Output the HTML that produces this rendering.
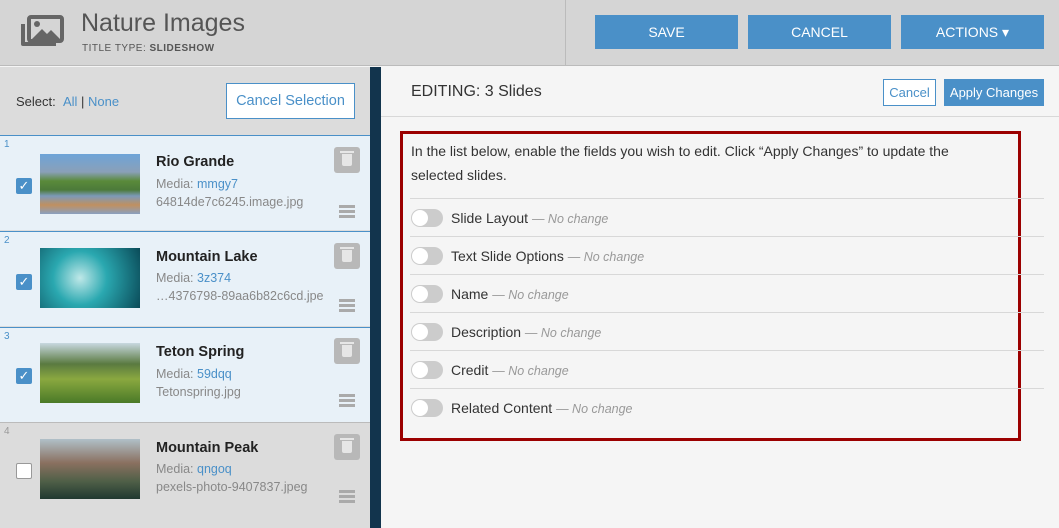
<!DOCTYPE html><html><head><style>
*{box-sizing:border-box;margin:0;padding:0}
body{width:1059px;height:528px;overflow:hidden;font-family:"Liberation Sans",sans-serif;background:#f5f5f5;position:relative;color:#333}
.abs{position:absolute}
.hdr{left:0;top:0;width:1059px;height:66px;background:#d5d5d5;border-bottom:1px solid #bbb}
.btn{top:15px;height:34px;width:143px;background:#4a90c8;color:#fff;font-size:14px;text-align:center;line-height:34px}
.item{left:0;width:370px;height:95px;border-top:1px solid #4a90c8}
.num{left:4px;font-size:10px;color:#4a90c8}
.cb{left:16px;width:16px;height:16px;background:#4a90c8;border-radius:2px;color:#fff;font-size:13px;text-align:center;line-height:16px}
.th{left:40px;width:100px;height:60px}
.t{left:156px;font-weight:bold;font-size:14.5px;color:#222}
.m{left:156px;font-size:12.5px;color:#888}
.m b{color:#4a90c8;font-weight:normal}
.trash{left:334px;width:26px;height:26px;background:#b8b8b8;border-radius:3px}
.trash:after{content:"";position:absolute;left:8px;top:7px;width:10px;height:12px;background:#e6e6e6;border-radius:0 0 2px 2px}
.trash:before{content:"";position:absolute;left:6px;top:4px;width:14px;height:2px;background:#e6e6e6}
.ham{left:339px;width:16px;height:3px;background:#aaa;box-shadow:0 5px #aaa,0 10px #aaa}
.row{left:410px;width:634px;height:38px;border-top:1px solid #d8d8d8;font-size:14px;line-height:38px;padding-left:41px;color:#333}
.row i{color:#999;font-size:12.5px}
.tog{position:absolute;left:1px;top:10px;width:32px;height:18px;border-radius:9px;background:#ccc}
.tog:after{content:"";position:absolute;left:1px;top:1px;width:16px;height:16px;border-radius:50%;background:#fff}
</style></head><body>
<div class="abs hdr"></div>
<svg class="abs" style="left:20px;top:14px" width="45" height="36" viewBox="0 0 45 36"><path d="M3 10v20h33" fill="none" stroke="#666" stroke-width="4" stroke-linejoin="round"/><rect x="9" y="3" width="33" height="24" rx="2" fill="none" stroke="#666" stroke-width="4"/><circle cx="17" cy="10" r="3" fill="#666"/><path d="M12 25l10-10 5 5 4-4 9 9z" fill="#666"/></svg>
<div class="abs" style="left:81px;top:9px;font-size:25px;color:#555;font-weight:300">Nature Images</div>
<div class="abs" style="left:82px;top:43px;font-size:10px;color:#555;letter-spacing:.5px">TITLE TYPE: <b>SLIDESHOW</b></div>
<div class="abs" style="left:565px;top:0;width:1px;height:66px;background:#bbb"></div>
<div class="abs btn" style="left:595px">SAVE</div>
<div class="abs btn" style="left:748px">CANCEL</div>
<div class="abs btn" style="left:901px">ACTIONS ▾</div>
<div class="abs" style="left:0;top:67px;width:370px;height:461px;background:#dcdcdc"></div>
<div class="abs" style="left:370px;top:67px;width:11px;height:461px;background:#12344d"></div>
<div class="abs" style="left:16px;top:94px;font-size:13px">Select: <span style="color:#4a90c8">&nbsp;All</span> | <span style="color:#4a90c8">None</span></div>
<div class="abs" style="left:226px;top:83px;width:129px;height:36px;background:#fff;border:1px solid #4a90c8;color:#4a90c8;font-size:14.5px;text-align:center;line-height:34px">Cancel Selection</div>

<div class="abs item" style="top:135px;background:#e8f1f8"><div class="abs num" style="top:3px">1</div><div class="abs cb" style="top:42px">✓</div><div class="abs th" style="top:18px;background:linear-gradient(#6ea4d8 0,#8aa0b8 30%,#5a8a3a 45%,#4c7a3a 60%,#7c9ab8 70%,#c09060 85%,#8aa0c0)"></div><div class="abs t" style="top:18px">Rio Grande</div><div class="abs m" style="top:41px">Media: <b>mmgy7</b></div><div class="abs m" style="top:59px">64814de7c6245.image.jpg</div><div class="abs trash" style="top:11px"></div><div class="abs ham" style="top:69px"></div></div>
<div class="abs item" style="top:231px;background:#e8f1f8"><div class="abs num" style="top:3px">2</div><div class="abs cb" style="top:42px">✓</div><div class="abs th" style="top:16px;background:radial-gradient(circle at 40% 50%,#bfe8e8,#2aa8b0 40%,#0a4a58)"></div><div class="abs t" style="top:17px">Mountain Lake</div><div class="abs m" style="top:39px">Media: <b>3z374</b></div><div class="abs m" style="top:57px">…4376798-89aa6b82c6cd.jpe</div><div class="abs trash" style="top:11px"></div><div class="abs ham" style="top:67px"></div></div>
<div class="abs item" style="top:327px;background:#e8f1f8"><div class="abs num" style="top:3px">3</div><div class="abs cb" style="top:40px">✓</div><div class="abs th" style="top:15px;background:linear-gradient(#c8d8e0,#5a7a40 35%,#8aa840 60%,#4a7a28)"></div><div class="abs t" style="top:16px">Teton Spring</div><div class="abs m" style="top:39px">Media: <b>59dqq</b></div><div class="abs m" style="top:57px">Tetonspring.jpg</div><div class="abs trash" style="top:10px"></div><div class="abs ham" style="top:66px"></div></div>
<div class="abs item" style="top:422px;background:#dcdcdc;border-top-color:#bbb"><div class="abs num" style="top:3px;color:#999">4</div><div class="abs" style="left:16px;top:40px;width:16px;height:16px;background:#fff;border:1px solid #999;border-radius:2px"></div><div class="abs th" style="top:16px;background:linear-gradient(#b0c0c8,#8a7060 40%,#506048 70%,#203830)"></div><div class="abs t" style="top:17px">Mountain Peak</div><div class="abs m" style="top:39px">Media: <b>qngoq</b></div><div class="abs m" style="top:57px">pexels-photo-9407837.jpeg</div><div class="abs trash" style="top:11px"></div><div class="abs ham" style="top:67px"></div></div>

<div class="abs" style="left:381px;top:116px;width:678px;height:1px;background:#d8d8d8"></div>
<div class="abs" style="left:411px;top:83px;font-size:16px;color:#333">EDITING: <span style="font-weight:500">3 Slides</span></div>
<div class="abs" style="left:883px;top:79px;width:53px;height:27px;background:#fff;border:1px solid #4a90c8;color:#4a90c8;font-size:13px;text-align:center;line-height:25px">Cancel</div>
<div class="abs" style="left:944px;top:79px;width:100px;height:27px;background:#4a90c8;color:#fff;font-size:13px;text-align:center;line-height:27px">Apply Changes</div>
<div class="abs" style="left:400px;top:131px;width:621px;height:310px;border:3px solid #9b0000"></div>
<div class="abs" style="left:411px;top:139px;width:575px;font-size:14px;line-height:24px;color:#333">In the list below, enable the fields you wish to edit. Click “Apply Changes” to update the selected slides.</div>
<div class="abs row" style="top:198px"><span class="tog"></span>Slide Layout <i>— No change</i></div>
<div class="abs row" style="top:236px"><span class="tog"></span>Text Slide Options <i>— No change</i></div>
<div class="abs row" style="top:274px"><span class="tog"></span>Name <i>— No change</i></div>
<div class="abs row" style="top:312px"><span class="tog"></span>Description <i>— No change</i></div>
<div class="abs row" style="top:350px"><span class="tog"></span>Credit <i>— No change</i></div>
<div class="abs row" style="top:388px"><span class="tog"></span>Related Content <i>— No change</i></div>
</body></html>
